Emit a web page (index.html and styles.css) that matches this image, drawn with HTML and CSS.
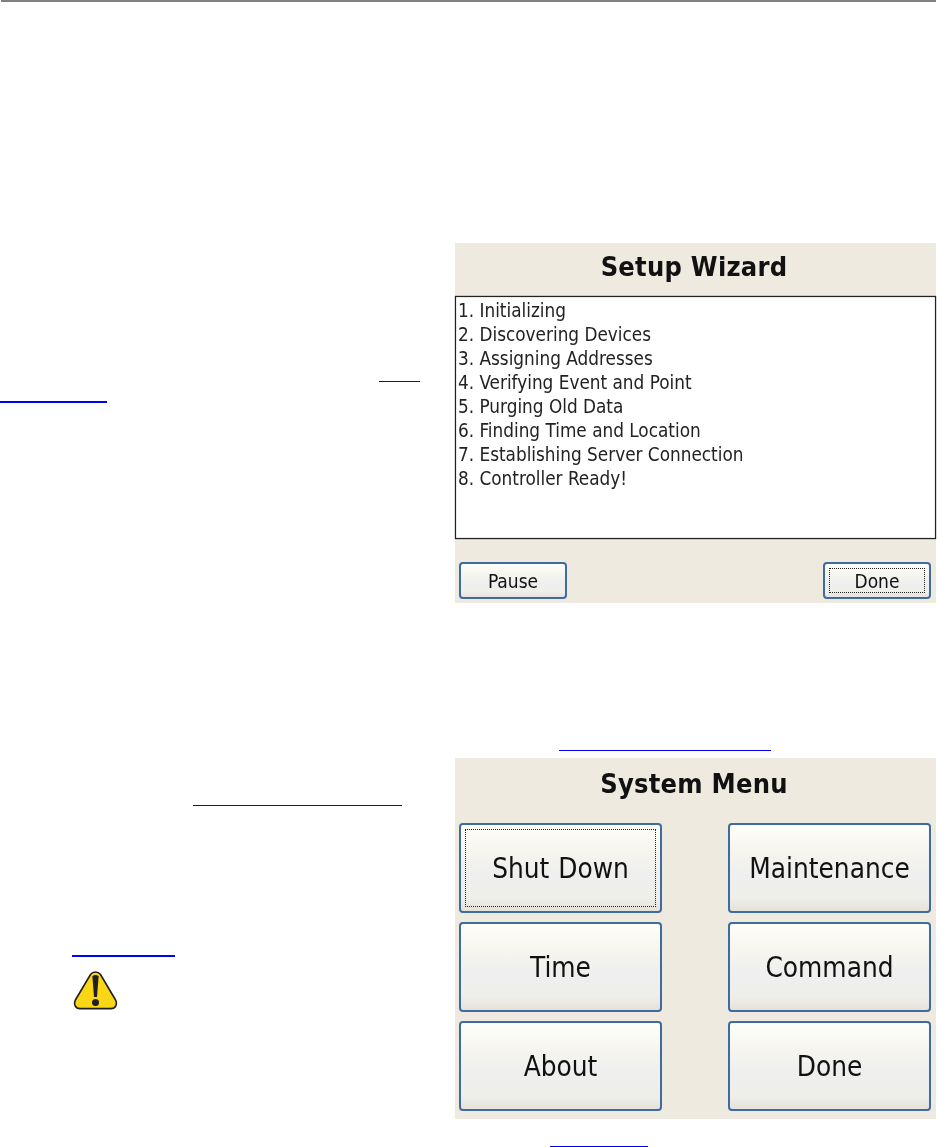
FILE: index.html
```html
<!DOCTYPE html>
<html lang="en">
<head>
<meta charset="utf-8">
<title>Setup Wizard</title>
<link rel="stylesheet" href="styles.css">
</head>
<body>
<div class="rule"></div>
<div class="page">
  <div class="left">
    <a class="link link-a" href="#" aria-label="link"></a>
    <a class="link link-b" href="#" aria-label="link"></a>
    <a class="link link-c" href="#" aria-label="link"></a>
    <a class="link link-d" href="#" aria-label="link"></a>
    <svg class="warn" viewBox="0 0 45 39" width="45" height="39" aria-hidden="true">
      <path d="M17.5 3.5 C20 .2 25 .2 27.5 3.5 L42.6 29 C44.6 33 42.6 37.6 38 37.6 L7 37.6 C2.4 37.6 .4 33 2.4 29 Z" fill="#f9d616" stroke="#231f20" stroke-width="1.6"/>
      <path d="M19.4 5.6 C20 3.4 25 3.4 25.6 5.6 L24 26 L21 26 Z" fill="#231f20"/>
      <circle cx="22.5" cy="31.6" r="3.5" fill="#231f20"/>
    </svg>
  </div>
  <div class="right">
    <section class="panel panel-setup">
      <h2 class="title title-setup">Setup Wizard</h2>
      <ol class="list">
        <li>1. Initializing</li>
        <li>2. Discovering Devices</li>
        <li>3. Assigning Addresses</li>
        <li>4. Verifying Event and Point</li>
        <li>5. Purging Old Data</li>
        <li>6. Finding Time and Location</li>
        <li>7. Establishing Server Connection</li>
        <li>8. Controller Ready!</li>
      </ol>
      <div class="actions">
        <button class="btn btn-small" type="button"><span class="label">Pause</span></button>
        <button class="btn btn-small focus" type="button"><span class="label">Done</span></button>
      </div>
    </section>
    <a class="link link-e" href="#" aria-label="link"></a>
    <section class="panel panel-menu">
      <h2 class="title title-menu">System Menu</h2>
      <div class="menu">
        <button class="btn btn-large focus" type="button"><span class="label">Shut Down</span></button>
        <button class="btn btn-large" type="button"><span class="label">Maintenance</span></button>
        <button class="btn btn-large" type="button"><span class="label">Time</span></button>
        <button class="btn btn-large" type="button"><span class="label">Command</span></button>
        <button class="btn btn-large" type="button"><span class="label">About</span></button>
        <button class="btn btn-large" type="button"><span class="label">Done</span></button>
      </div>
    </section>
    <a class="link link-f" href="#" aria-label="link"></a>
  </div>
</div>
</body>
</html>
```
FILE: styles.css
```css
* { box-sizing: border-box; }
html, body { margin: 0; padding: 0; background: #fff; }
body { font-family: "DejaVu Sans Condensed", "DejaVu Sans", Verdana, sans-serif; font-stretch: condensed; color: #111; }

.rule { height: 2px; margin: 0 1px; background: #808080; }

.page { display: flex; align-items: flex-start; }
.left { width: 455px; flex: none; display: flex; flex-direction: column; align-items: flex-start; }
.right { width: 481px; flex: none; display: flex; flex-direction: column; align-items: flex-start; }

.link { display: block; height: 1px; background: #0000ff; }
.link-a { margin: 379px 0 0 379px; width: 41px; }
.link-b { margin-top: 19px; width: 107px; height: 2px; }
.link-c { margin: 402px 0 0 193px; width: 209px; }
.link-d { margin: 149px 0 0 72px; width: 103px; height: 2px; }
.link-e { margin: 147px 0 7px 104px; width: 212px; }
.link-f { margin: 27px 0 0 95px; width: 98px; }

.warn { display: block; margin: 14px 0 0 73px; }

.panel { width: 481px; background: #eeeadf; display: flex; flex-direction: column; }
.panel-setup { margin-top: 241px; height: 360px; }
.panel-menu { height: 361px; }

.title { margin: 0; padding-right: 3px; text-align: center; font-size: 27px; font-weight: 700; letter-spacing: .25px; color: #111; filter: blur(.35px); }
.title-setup { height: 53px; line-height: 48px; }
.title-menu { height: 65px; line-height: 52px; }

.list {
  list-style: none;
  margin: 0;
  height: 243px;
  padding: 2px 0 0 2px;
  background: #fff;
  border: 1px solid #222;
  box-shadow: 0 0 1px #222, inset 0 0 1px #222;
  font-size: 18.8px;
  line-height: 24px;
  color: #222;
}
.list li { filter: blur(.3px); }

.actions { display: flex; justify-content: space-between; padding: 23px 5px 0 4px; }

.menu { display: grid; grid-template-columns: 203px 203px; justify-content: space-between; row-gap: 9px; padding: 0 5px 0 4px; }

.btn {
  position: relative;
  display: flex;
  align-items: center;
  justify-content: center;
  padding: 0;
  font-family: inherit;
  font-stretch: condensed;
  color: #111;
  border: 2px solid #3f6c9e;
  border-radius: 4px;
  background: linear-gradient(#fffffb 0%, #f6f5ee 30%, #efefef 55%, #eeeeea 85%, #e6e2da 100%);
}
.btn-small { width: 108px; height: 37px; font-size: 19px; }
.btn-large { width: 203px; height: 90px; font-size: 27.7px; }
.label { word-spacing: 1px; filter: blur(.3px); }

.focus::after {
  content: "";
  position: absolute;
  inset: 4px;
  border: 1px dotted #222;
}
```
